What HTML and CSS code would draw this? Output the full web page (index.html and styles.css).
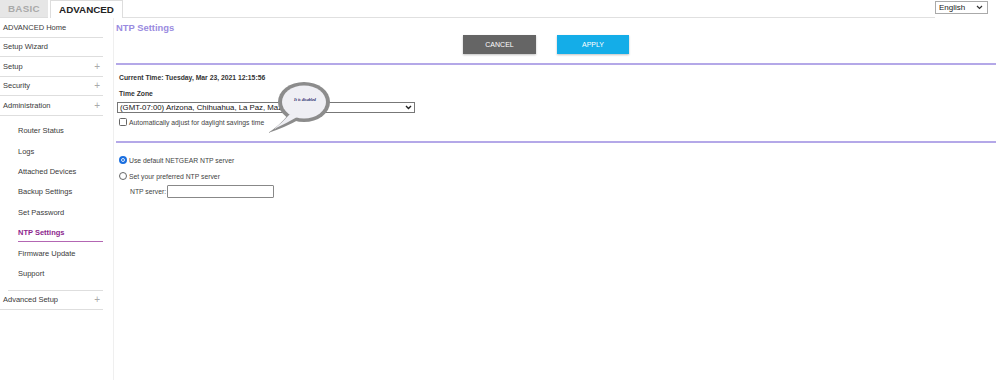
FILE: index.html
```html
<!DOCTYPE html>
<html>
<head>
<meta charset="utf-8">
<link rel="stylesheet" href="styles.css">
</head>
<body>
<div class="topbar">
  <div class="tab tab-basic">BASIC</div>
  <div class="tab tab-adv">ADVANCED</div>
  <div class="topfill"></div>
  <div class="lang"><span>English</span><svg width="7" height="5" viewBox="0 0 7 5"><path d="M1 1l2.5 2.5L6 1" fill="none" stroke="#333" stroke-width="1.2"/></svg></div>
</div>
<div class="main">
  <nav class="nav">
    <div class="row">ADVANCED Home</div>
    <div class="row">Setup Wizard</div>
    <div class="row">Setup<span class="plus">+</span></div>
    <div class="row">Security<span class="plus">+</span></div>
    <div class="row">Administration<span class="plus">+</span></div>
    <div class="sub">
      <div class="subitem">Router Status</div>
      <div class="subitem">Logs</div>
      <div class="subitem">Attached Devices</div>
      <div class="subitem">Backup Settings</div>
      <div class="subitem">Set Password</div>
      <div class="subitem active">NTP Settings</div>
      <div class="subitem">Firmware Update</div>
      <div class="subitem">Support</div>
    </div>
    <div class="row">Advanced Setup<span class="plus">+</span></div>
  </nav>
  <section class="content">
    <h1 class="title">NTP Settings</h1>
    <div class="buttons">
      <div class="btn cancel">CANCEL</div>
      <div class="btn apply">APPLY</div>
    </div>
    <div class="block">
      <div class="curtime">Current Time: Tuesday, Mar 23, 2021 12:15:56</div>
      <div class="label">Time Zone</div>
      <div class="select"><span>(GMT-07:00) Arizona, Chihuahua, La Paz, Mazatlan</span><svg width="7" height="5" viewBox="0 0 7 5"><path d="M1 1l2.5 2.5L6 1" fill="none" stroke="#222" stroke-width="1.4"/></svg></div>
      <div class="check"><span class="box"></span>Automatically adjust for daylight savings time</div>
    </div>
    <div class="block2">
      <div class="radio"><span class="dot on"></span>Use default NETGEAR NTP server</div>
      <div class="radio"><span class="dot"></span>Set your preferred NTP server</div>
      <div class="server">NTP server: <span class="input"></span></div>
    </div>
    <svg class="balloon" width="70" height="56" viewBox="0 0 70 56">
      <path d="M26 34 Q18 44 6 52 Q24 46 38 38 Z" fill="#8c8c8c"/>
      <ellipse cx="42" cy="21" rx="26" ry="20" fill="#8c8c8c"/>
      <ellipse cx="42" cy="21" rx="22" ry="16.5" fill="#efeff4"/>
      <path d="M28 33 Q20 42 12 48 Q25 42 36 35.5 Z" fill="#efeff4"/>
      <text x="43" y="20" text-anchor="middle" class="btext">It is disabled</text>
    </svg>
  </section>
</div>
</body>
</html>
```
FILE: styles.css
```css
* { box-sizing: border-box; }
html, body { margin: 0; padding: 0; background: #fff; }
body {
  width: 998px;
  height: 380px;
  overflow: hidden;
  font-family: "Liberation Sans", Arial, sans-serif;
  color: #333;
}
.topbar {
  display: flex;
  align-items: flex-end;
  height: 18px;
}
.tab {
  height: 18px;
  font-size: 9.8px;
  font-weight: bold;
  display: flex;
  align-items: center;
  justify-content: center;
}
.tab-basic {
  width: 48px;
  background: #e6e6e6;
  color: #a9a9a9;
  border-bottom: 1px solid #ddd;
  letter-spacing: 0.3px;
}
.tab-adv {
  margin-left: 2px;
  width: 73px;
  color: #222;
  background: #fff;
  border: 1px solid #ddd;
  border-bottom: none;
}
.topfill {
  flex: 1;
  height: 18px;
  border-bottom: 1px solid #e0e0e0;
  margin-right: 68px;
}
.lang {
  align-self: flex-start;
  margin-top: 1px;
  margin-right: 10px;
  width: 53px;
  height: 13px;
  border: 1px solid #aaa;
  display: flex;
  align-items: center;
  justify-content: space-between;
  padding: 0 4px 0 3px;
  font-size: 8px;
  color: #222;
  margin-left: -68px;
}
.main {
  display: flex;
  height: 362px;
}
.nav {
  width: 114px;
  border-right: 1px solid #efefef;
  padding-right: 10px;
  font-size: 7.5px;
  color: #3a3a3a;
}
.row {
  height: 19.5px;
  border-bottom: 1px solid #dedede;
  display: flex;
  align-items: center;
  justify-content: space-between;
  padding-left: 3px;
  padding-right: 3px;
}
.plus {
  color: #aaa;
  font-size: 10px;
  font-weight: 300;
}
.sub {
  padding-top: 5px;
  padding-bottom: 6px;
  margin-left: 8px;
  border-bottom: 1px solid #dedede;
}
.subitem {
  height: 20.4px;
  display: flex;
  align-items: center;
  padding-left: 10px;
}
.subitem.active {
  color: #8d1f8d;
  font-weight: bold;
  position: relative;
}
.subitem.active::after {
  content: "";
  position: absolute;
  left: 10px;
  right: 0;
  bottom: 1px;
  height: 1px;
  background: #b366b3;
}
.content {
  position: relative;
  flex: 1;
  padding-left: 2px;
  padding-right: 2px;
}
.title {
  margin: 0;
  padding-top: 4px;
  font-size: 9.4px;
  font-weight: bold;
  color: #9a8be0;
  height: 17px;
}
.buttons {
  display: flex;
  gap: 21px;
  padding-left: 347px;
  height: 30px;
  border-bottom: 2px solid #b4a8e8;
}
.btn {
  height: 19px;
  display: flex;
  align-items: center;
  justify-content: center;
  color: #fff;
  font-size: 7px;
  box-shadow: 0 1px 2px rgba(0,0,0,0.25);
}
.cancel { width: 73px; background: #656565; }
.apply { width: 72px; background: #14ade8; }
.block {
  padding: 9px 0 0 3px;
  height: 78px;
  border-bottom: 2px solid #b4a8e8;
}
.curtime {
  font-size: 6.8px;
  font-weight: bold;
  color: #333;
  height: 16px;
}
.label {
  font-size: 6.8px;
  font-weight: bold;
  color: #333;
  height: 12px;
}
.select {
  margin-left: -2px;
  width: 298px;
  height: 11px;
  border: 1px solid #777;
  display: flex;
  align-items: center;
  justify-content: space-between;
  padding: 0 2px 0 2px;
  font-size: 7.8px;
  color: #111;
}
.check {
  margin-top: 5px;
  font-size: 6.8px;
  color: #444;
  display: flex;
  align-items: center;
}
.box {
  width: 8px;
  height: 8px;
  border: 1px solid #666;
  border-radius: 1.5px;
  margin-right: 2px;
}
.block2 {
  padding: 9px 0 0 3px;
}
.radio {
  display: flex;
  align-items: center;
  font-size: 6.8px;
  color: #444;
  height: 16px;
}
.dot {
  width: 8px;
  height: 8px;
  border-radius: 50%;
  border: 1px solid #666;
  margin-right: 2px;
}
.dot.on {
  border: 2px solid #1a6fe0;
  background: #1a6fe0;
  box-shadow: inset 0 0 0 1px #fff;
}
.server {
  display: flex;
  align-items: center;
  font-size: 6.8px;
  color: #444;
  padding-left: 11px;
  height: 14px;
}
.input {
  display: inline-block;
  margin-left: 1px;
  width: 107px;
  height: 13px;
  border: 1px solid #888;
  border-radius: 1px;
}
.balloon {
  position: absolute;
  left: 148px;
  top: 63px;
}
.btext {
  font-family: "Liberation Serif", serif;
  font-style: italic;
  font-weight: bold;
  font-size: 4.2px;
  fill: #2a2a6a;
}
```
